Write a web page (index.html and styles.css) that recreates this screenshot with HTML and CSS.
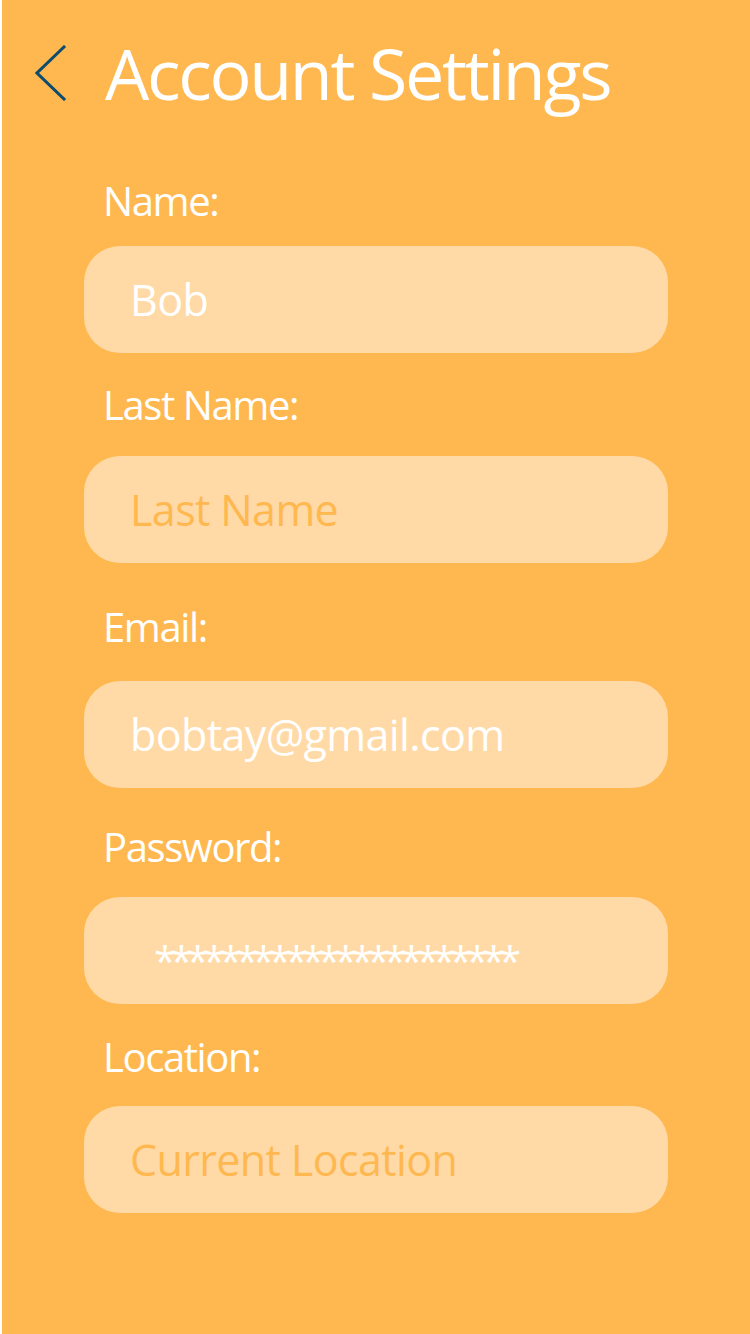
FILE: index.html
```html
<!DOCTYPE html>
<html lang="en">
<head>
<meta charset="utf-8">
<title>Account Settings</title>
<link rel="stylesheet" href="styles.css">
</head>
<body>
<div class="screen">
  <header class="header">
    <a class="back" href="#" aria-label="Back">
      <svg viewBox="0 0 32 56" width="32" height="56" aria-hidden="true">
        <polyline points="29,2 2,28 29,54" fill="none" stroke="#0E4B6C" stroke-width="3" stroke-linecap="square" stroke-linejoin="miter"/>
      </svg>
    </a>
    <h1 class="title">Account Settings</h1>
  </header>
  <form class="form">
    <div class="group group--name">
      <label class="label" for="name">Name:</label>
      <input class="field" id="name" type="text" value="Bob">
    </div>
    <div class="group group--last">
      <label class="label" for="last">Last Name:</label>
      <input class="field" id="last" type="text" placeholder="Last Name">
    </div>
    <div class="group group--email">
      <label class="label" for="email">Email:</label>
      <input class="field" id="email" type="text" value="bobtay@gmail.com">
    </div>
    <div class="group group--password">
      <label class="label" for="password">Password:</label>
      <input class="field field--password" id="password" type="text" value="**********************">
    </div>
    <div class="group group--location">
      <label class="label" for="location">Location:</label>
      <input class="field" id="location" type="text" placeholder="Current Location">
    </div>
  </form>
</div>
</body>
</html>
```
FILE: styles.css
```css
html, body {
  margin: 0;
  padding: 0;
  background: #ffffff;
}

body {
  font-family: "Open Sans", "Noto Sans", sans-serif;
}

.screen {
  margin-left: 2px;
  width: 748px;
  height: 1334px;
  background: #FFB84F;
  box-sizing: border-box;
  overflow: hidden;
}

.header {
  display: flex;
  align-items: center;
  padding: 31px 0 0 33px;
}

.back {
  display: flex;
  width: 32px;
  height: 56px;
}

.title {
  margin: 0 0 0 38px;
  font-size: 70px;
  line-height: 84px;
  font-weight: 400;
  color: #ffffff;
  letter-spacing: -2.3px;
}

.form {
  display: flex;
  flex-direction: column;
  padding: 62px 0 0 82px;
}

.group {
  display: flex;
  flex-direction: column;
}

.label {
  display: block;
  padding-left: 19px;
  margin-bottom: 26px;
  font-size: 40px;
  line-height: 48px;
  color: #ffffff;
  letter-spacing: -1.4px;
}

.field {
  width: 584px;
  height: 107px;
  box-sizing: border-box;
  border: none;
  outline: none;
  border-radius: 36px;
  background: #FFDAA6;
  padding: 0 20px 0 46px;
  font-family: "Open Sans", "Noto Sans", sans-serif;
  font-size: 43px;
  color: #ffffff;
  letter-spacing: -0.6px;
}

.field::placeholder {
  color: #FFB84F;
  opacity: 1;
}

.field--password {
  padding-left: 70px;
  padding-top: 20px;
  font-size: 40px;
  letter-spacing: -5.6px;
}

.group--name .label { margin-bottom: 21px; }
.group--last { margin-top: 28px; }
.group--last .label { margin-bottom: 27px; }
.group--email { margin-top: 40px; }
.group--email .label { margin-bottom: 30px; }
.group--password { margin-top: 35px; }
.group--location { margin-top: 29px; }
.group--location .label { margin-bottom: 25px; }
```
